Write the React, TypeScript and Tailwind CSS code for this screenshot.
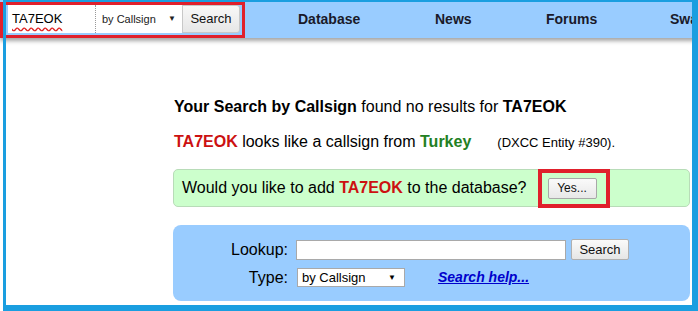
import React from "react";

function Nav() {
  return (
    <header className="relative z-10 h-[38px] bg-[#99ccff] shadow-[0_3px_4px_rgba(0,0,0,0.35)] flex items-center">
      <form className="ml-[8px] flex items-center h-[28px]">
        <div className="w-[87px] h-[28px] bg-white flex items-center pl-[4px]">
          <span className="text-[13px] text-black underline decoration-wavy decoration-[#e02020] underline-offset-[3px]">TA7EOK</span>
        </div>
        <div className="w-[87px] h-[28px] bg-white border-l border-dotted border-[#999] flex items-center justify-between pl-[6px] pr-[6px] text-[11px] text-[#222]">
          <span>by Callsign</span>
          <span className="text-[8px]">▼</span>
        </div>
        <button type="button" className="w-[58px] h-[28px] bg-gradient-to-b from-[#f8f8f8] to-[#e6e6e6] border border-[#c8c8c8] rounded-r-[3px] text-[13px] text-[#111]">
          Search
        </button>
      </form>
      <nav className="flex items-center ml-[58px] text-[14px] font-bold text-[#1a1a2a] whitespace-nowrap">
        <a className="w-[137px]">Database</a>
        <a className="w-[111px]">News</a>
        <a className="w-[124px]">Forums</a>
        <a>Swap</a>
      </nav>
    </header>
  );
}

function Results() {
  return (
    <main className="pl-[173px] pr-[8px] pt-[59px] text-[16px] text-black">
      <p className="leading-[20px] pl-[1px] whitespace-nowrap">
        <b>Your Search by Callsign</b> found no results for <b>TA7EOK</b>
      </p>
      <p className="leading-[20px] mt-[15px] pl-[1px] whitespace-nowrap">
        <b className="text-[#cc1111]">TA7EOK</b> looks like a callsign from{" "}
        <b className="text-[#238023]">Turkey</b>
        <span className="ml-[26px] text-[13px]">(DXCC Entity #390).</span>
      </p>
      <div className="mt-[16px] h-[38px] bg-[#ccffcc] border border-[#b8dcb8] rounded-[5px] flex items-center pl-[8px] whitespace-nowrap">
        <span>
          Would you like to add <b className="text-[#cc1111]">TA7EOK</b> to the database?
        </span>
        <button type="button" className="ml-[21px] w-[49px] h-[21px] bg-gradient-to-b from-[#fafafa] to-[#e8e8e8] border border-[#a8a8a8] rounded-[2px] text-[12px] text-[#111]">
          Yes...
        </button>
      </div>
      <div className="mt-[18px] h-[76px] bg-[#99ccff] rounded-[8px] pt-[14px]">
        <div className="grid grid-cols-[115px_auto] gap-x-[8px] gap-y-[8px] items-center leading-[19px]">
          <span className="text-right">Lookup:</span>
          <div className="flex items-center">
            <div className="w-[270px] h-[20px] bg-white border border-[#a9a9a9]" />
            <button type="button" className="ml-[5px] w-[58px] h-[21px] bg-gradient-to-b from-[#fafafa] to-[#e6e6e6] border border-[#b0b0b0] rounded-[2px] text-[13px] text-[#111]">
              Search
            </button>
          </div>
          <span className="text-right">Type:</span>
          <div className="flex items-center">
            <div className="ml-[1px] w-[108px] h-[19px] bg-white border border-[#a9a9a9] flex items-center justify-between pl-[4px] pr-[8px] text-[13px] text-black">
              <span>by Callsign</span>
              <span className="text-[8px]">▼</span>
            </div>
            <a className="ml-[33px] text-[14px] font-bold italic underline text-[#0000cc]">Search help...</a>
          </div>
        </div>
      </div>
    </main>
  );
}

export default function App() {
  return (
    <div className="relative w-[698px] h-[311px] overflow-hidden bg-white font-['Liberation_Sans',Arial,sans-serif]">
      <Nav />
      <Results />
      {/* annotation boxes */}
      <div className="absolute left-0 top-[2px] w-[245px] h-[36px] border-[3px] border-[#e0202c] z-20 pointer-events-none" />
      <div className="absolute left-[538px] top-[169px] w-[72px] h-[39px] border-[4px] border-[#e0202c] z-20 pointer-events-none" />
      {/* blue frame */}
      <div className="absolute left-[3px] top-0 right-0 bottom-0 border-l-[3px] border-t-[2px] border-r-[6px] border-b-[6px] border-[#1a9ee0] z-30 pointer-events-none" />
    </div>
  );
}
